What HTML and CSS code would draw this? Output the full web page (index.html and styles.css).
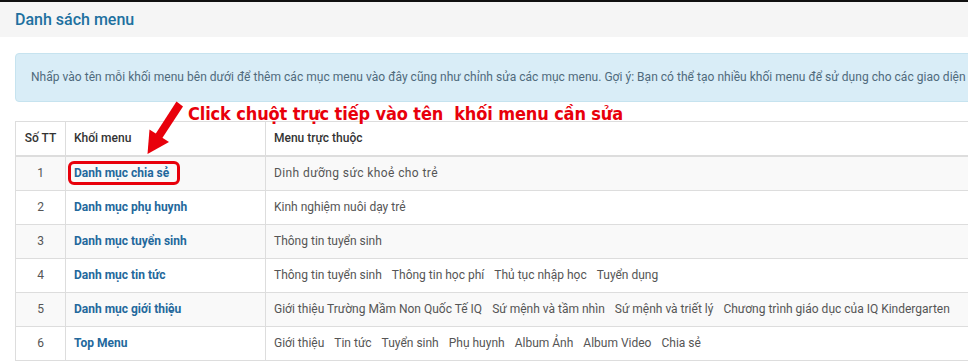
FILE: index.html
```html
<!DOCTYPE html>
<html lang="vi">
<head>
<meta charset="utf-8">
<title>Danh sách menu</title>
<link rel="stylesheet" href="styles.css">
</head>
<body>
<div class="page">
  <div class="topline"></div>
  <div class="titlebar"><h1 class="title">Danh sách menu</h1></div>
  <div class="content">
    <div class="alert">Nhấp vào tên mỗi khối menu bên dưới để thêm các mục menu vào đây cũng như chỉnh sửa các mục menu. Gợi ý: Bạn có thể tạo nhiều khối menu để sử dụng cho các giao diện</div>
    <table class="grid">
      <thead>
        <tr><th class="c-no">Số TT</th><th class="c-name">Khối menu</th><th class="c-items">Menu trực thuộc</th></tr>
      </thead>
      <tbody>
        <tr class="odd"><td class="num">1</td><td><a class="blk hl" href="#">Danh mục chia sẻ</a></td><td class="items"><span class="wide">Dinh dưỡng sức khoẻ cho trẻ</span></td></tr>
        <tr><td class="num">2</td><td><a class="blk" href="#">Danh mục phụ huynh</a></td><td class="items"><span>Kinh nghiệm nuôi dạy trẻ</span></td></tr>
        <tr class="odd"><td class="num">3</td><td><a class="blk" href="#">Danh mục tuyển sinh</a></td><td class="items"><span>Thông tin tuyển sinh</span></td></tr>
        <tr><td class="num">4</td><td><a class="blk" href="#">Danh mục tin tức</a></td><td class="items"><span>Thông tin tuyển sinh</span><span>Thông tin học phí</span><span>Thủ tục nhập học</span><span>Tuyển dụng</span></td></tr>
        <tr class="odd"><td class="num">5</td><td><a class="blk" href="#">Danh mục giới thiệu</a></td><td class="items"><span>Giới thiệu Trường Mầm Non Quốc Tế IQ</span><span>Sứ mệnh và tầm nhìn</span><span>Sứ mệnh và triết lý</span><span>Chương trình giáo dục của IQ Kindergarten</span></td></tr>
        <tr><td class="num">6</td><td><a class="blk" href="#">Top Menu</a></td><td class="items"><span>Giới thiệu</span><span>Tin tức</span><span>Tuyển sinh</span><span>Phụ huynh</span><span>Album Ảnh</span><span>Album Video</span><span>Chia sẻ</span></td></tr>
      </tbody>
    </table>
  </div>
  <div class="note">Click chuột trực tiếp vào tên&nbsp; khối menu cần sửa</div>
  <svg class="arrow" width="968" height="361" viewBox="0 0 968 361" aria-hidden="true">
    <polygon points="183,106.5 176.5,101.5 155.5,134 162,138.5" fill="#e8000b"/>
    <polygon points="147.5,154 149.5,129.5 169,142" fill="#e8000b"/>
  </svg>
</div>
</body>
</html>
```
FILE: styles.css
```css
html, body {
  margin: 0;
  padding: 0;
  background: #fff;
  overflow: hidden;
}
body {
  font-family: Roboto, "Noto Sans", Arial, sans-serif;
  font-size: 12px;
  color: #555;
}
.page {
  position: relative;
  width: 968px;
  height: 361px;
  overflow: hidden;
}
.topline {
  height: 2px;
  background: #111;
}
.titlebar {
  height: 35px;
  background: #f5f5f5;
  padding-left: 15px;
}
.title {
  margin: 0;
  font-size: 16px;
  font-weight: 500;
  line-height: 35px;
  color: #20709f;
}
.content {
  padding: 16px 0 0 15px;
  width: 1100px;
}
.alert {
  border: 1px solid #c6e3ef;
  background: #d9edf7;
  border-radius: 4px;
  padding: 15px;
  line-height: 17px;
  color: #4f6a7c;
  white-space: nowrap;
  overflow: hidden;
  letter-spacing: 0.03px;
}
.grid {
  margin-top: 19px;
  width: 1100px;
  border-collapse: collapse;
  border: 1px solid #ddd;
}
.grid th, .grid td {
  border: 1px solid #ddd;
  padding: 8px;
  line-height: 17px;
  text-align: left;
  white-space: nowrap;
}
.grid th {
  color: #333;
  font-weight: 500;
  border-bottom: 2px solid #ddd;
}
.grid th.c-no {
  width: 33px;
  text-align: center;
}
.grid th.c-name {
  width: 183px;
}
.grid tr.odd td {
  background: #f9f9f9;
}
.grid td.num {
  text-align: center;
}
.blk {
  color: #23689c;
  font-weight: 700;
  text-decoration: none;
}
.hl {
  display: inline-block;
  vertical-align: top;
  line-height: 16px;
  padding: 0 7px 0 2px;
  margin: 0 -7px 0 -2px;
  outline: 3px solid #e8000b;
  outline-offset: 1px;
  border-radius: 2px;
}
.items span {
  margin-right: 10px;
}
.items span.wide {
  letter-spacing: 0.4px;
}
.note {
  position: absolute;
  left: 188px;
  top: 103px;
  font-family: "DejaVu Sans Condensed", "DejaVu Sans", sans-serif;
  font-weight: 700;
  font-size: 18px;
  line-height: 22px;
  letter-spacing: -0.12px;
  color: #e8000b;
  white-space: nowrap;
}
.arrow {
  position: absolute;
  left: 0;
  top: 0;
  pointer-events: none;
}
```
